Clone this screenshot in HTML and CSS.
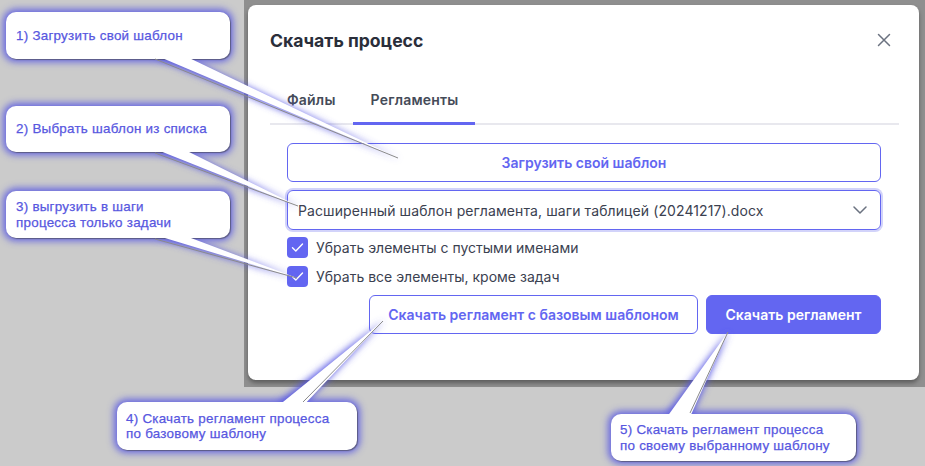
FILE: index.html
```html
<!DOCTYPE html>
<html lang="ru">
<head>
<meta charset="utf-8">
<title>Скачать процесс</title>
<link rel="stylesheet" href="styles.css">
</head>
<body>
<div class="page">
  <div class="backdrop">
    <div class="modal">
      <div class="modal-header">
        <h2 class="modal-title">Скачать процесс</h2>
        <svg class="close" width="14" height="14" viewBox="0 0 14 14"><path d="M1.5 1.5L12.5 12.5M12.5 1.5L1.5 12.5" stroke="#6b7280" stroke-width="1.5" fill="none" stroke-linecap="round"/></svg>
      </div>
      <div class="tabs">
        <div class="tab">Файлы</div>
        <div class="tab tab-active">Регламенты</div>
      </div>
      <div class="modal-body">
        <button class="btn btn-outline btn-full">Загрузить свой шаблон</button>
        <div class="select">
          <span class="select-value">Расширенный шаблон регламента, шаги таблицей (20241217).docx</span>
          <svg class="chevron" width="14" height="8" viewBox="0 0 14 8"><path d="M1 1L7 7L13 1" stroke="#6b7280" stroke-width="1.5" fill="none" stroke-linecap="round" stroke-linejoin="round"/></svg>
        </div>
        <label class="check-row">
          <span class="checkbox"><svg width="21" height="21" viewBox="0 0 21 21"><path d="M5.5 10.8L8.8 14L15.5 7" stroke="#fff" stroke-width="1.4" fill="none" stroke-linecap="round" stroke-linejoin="round"/></svg></span>
          <span class="check-label">Убрать элементы с пустыми именами</span>
        </label>
        <label class="check-row">
          <span class="checkbox"><svg width="21" height="21" viewBox="0 0 21 21"><path d="M5.5 10.8L8.8 14L15.5 7" stroke="#fff" stroke-width="1.4" fill="none" stroke-linecap="round" stroke-linejoin="round"/></svg></span>
          <span class="check-label">Убрать все элементы, кроме задач</span>
        </label>
        <div class="actions">
          <button class="btn btn-outline btn-base">Скачать регламент с базовым шаблоном</button>
          <button class="btn btn-primary">Скачать регламент</button>
        </div>
      </div>
    </div>
  </div>

  <svg class="tails tails-glow" width="925" height="466" viewBox="0 0 925 466">
    <defs>
      <filter id="glow" x="-50%" y="-50%" width="200%" height="200%">
        <feGaussianBlur stdDeviation="3.5"/>
      </filter>
    </defs>
    <g fill="#5656e4" filter="url(#glow)">
      <polygon points="153,57 185,57 400,159"/>
      <polygon points="153,151 185,151 300,207"/>
      <polygon points="153,237 185,237 299,279"/>
      <polygon points="276,404 305,404 384,320"/>
      <polygon points="665,415 692,415 729,331"/>
    </g>
  </svg>

  <div class="callout c1"><p>1) Загрузить свой шаблон</p></div>
  <div class="callout c2"><p>2) Выбрать шаблон из списка</p></div>
  <div class="callout c3"><p>3) выгрузить в шаги<br>процесса только задачи</p></div>
  <div class="callout c4"><p>4) Скачать регламент процесса<br>по базовому шаблону</p></div>
  <div class="callout c5"><p>5) Скачать регламент процесса<br>по своему выбранному шаблону</p></div>

  <svg class="tails tails-fill" width="925" height="466" viewBox="0 0 925 466">
    <g fill="#ffffff">
      <polygon points="155,55 183,55 398,158"/>
      <polygon points="155,149 183,149 298,206"/>
      <polygon points="155,235 183,235 297,278"/>
      <polygon points="278,406 303,406 383,321"/>
      <polygon points="667,417 690,417 728,332"/>
    </g>
    <g stroke="#8a8a8a" stroke-width="1" fill="none">
      <line x1="155" y1="59" x2="398" y2="158"/>
      <line x1="155" y1="153" x2="298" y2="206"/>
      <line x1="155" y1="239" x2="297" y2="278"/>
      <line x1="303" y1="402" x2="383" y2="321"/>
      <line x1="690" y1="413" x2="728" y2="332"/>
    </g>
  </svg>
</div>
</body>
</html>
```

FILE: styles.css
```css
* { box-sizing: border-box; }
html, body { margin: 0; padding: 0; }
body {
  background: #cbcbcb;
  width: 925px;
  height: 466px;
  overflow: hidden;
  font-family: "Inter", "Noto Sans", sans-serif;
}
.page {
  position: relative;
  width: 925px;
  height: 466px;
}
.backdrop {
  margin-left: 244px;
  width: 681px;
  height: 387px;
  background: #8f8f8f;
  padding: 5px 6px 0 4px;
}
.modal {
  width: 671px;
  height: 375px;
  background: #fff;
  border-radius: 8px;
  box-shadow: 0 3px 4px rgba(0,0,0,0.35);
  padding: 0 20px 0 22px;
}
.modal-header {
  height: 70px;
  display: flex;
  align-items: center;
  justify-content: space-between;
}
.modal-title {
  margin: 0;
  font-size: 17.6px;
  font-weight: 700;
  color: #2a2e3a;
}
.close { margin-right: 8px; }
.tabs {
  display: flex;
  border-bottom: 2px solid #e8e8ee;
}
.tab {
  height: 50px;
  margin-bottom: -2px;
  padding: 2px 17px 0 17px;
  display: flex;
  align-items: center;
  font-size: 14px;
  font-weight: 600;
  color: #454b58;
  letter-spacing: 0.2px;
  border-bottom: 3px solid transparent;
}
.tab-active {
  border-bottom-color: #6366f1;
  padding-left: 18px;
}
.modal-body {
  padding: 18px 18px 0 17px;
  display: flex;
  flex-direction: column;
}
.btn {
  font-family: inherit;
  font-size: 14px;
  font-weight: 600;
  height: 39px;
  border-radius: 6px;
  cursor: pointer;
}
.btn-outline {
  background: #fff;
  border: 1px solid #6366f1;
  color: #6366f1;
}
.btn-full { width: 100%; }
.select {
  margin-top: 8px;
  height: 40px;
  border: 1.5px solid #6366f1;
  border-radius: 6px;
  box-shadow: 0 0 0 2px #d2d3fa;
  display: flex;
  align-items: center;
  justify-content: space-between;
  padding: 0 13px 0 10px;
}
.select-value {
  font-size: 14px;
  color: #3b4150;
  letter-spacing: 0.1px;
}
.check-row {
  display: flex;
  align-items: center;
  gap: 8px;
  height: 21px;
  margin-top: 7px;
}
.check-row + .check-row { margin-top: 8px; }
.checkbox {
  width: 21px;
  height: 21px;
  border-radius: 4px;
  background: #6366f1;
  display: block;
}
.checkbox svg { display: block; }
.check-label {
  font-size: 14px;
  color: #3b4150;
}
.actions {
  margin-top: 8px;
  display: flex;
  justify-content: flex-end;
  gap: 8px;
}
.btn-base { width: 329px; }
.btn-primary {
  width: 175px;
  background: #6366f1;
  border: 1px solid #6366f1;
  color: #fff;
}

/* annotation overlay */
.tails {
  position: absolute;
  left: 0;
  top: 0;
  pointer-events: none;
}
.tails-glow { z-index: 1; }
.tails-fill { z-index: 3; }
.callout {
  position: absolute;
  z-index: 2;
  background: #fff;
  border-radius: 10px;
  box-shadow: 1px 1px 1px rgba(60,60,60,0.55), 0 0 7px 3px rgba(86,86,228,0.85);
  display: flex;
  align-items: center;
  font-family: "Liberation Sans", Arial, sans-serif;
  font-size: 13.4px;
  color: #5757df;
  letter-spacing: 0.25px;
  -webkit-text-stroke: 0.25px #5757df;
}
.callout p { margin: 0; line-height: 15.5px; }
.c1 { left: 6px; top: 12px; width: 224px; height: 47px; padding-left: 10px; }
.c2 { left: 6px; top: 106px; width: 224px; height: 46px; padding-left: 10px; }
.c3 { left: 6px; top: 191px; width: 224px; height: 47px; padding-left: 10px; }
.c4 { left: 117px; top: 402px; width: 240px; height: 48px; padding-left: 9px; }
.c5 { left: 611px; top: 414px; width: 245px; height: 47px; padding-left: 9px; }
```
